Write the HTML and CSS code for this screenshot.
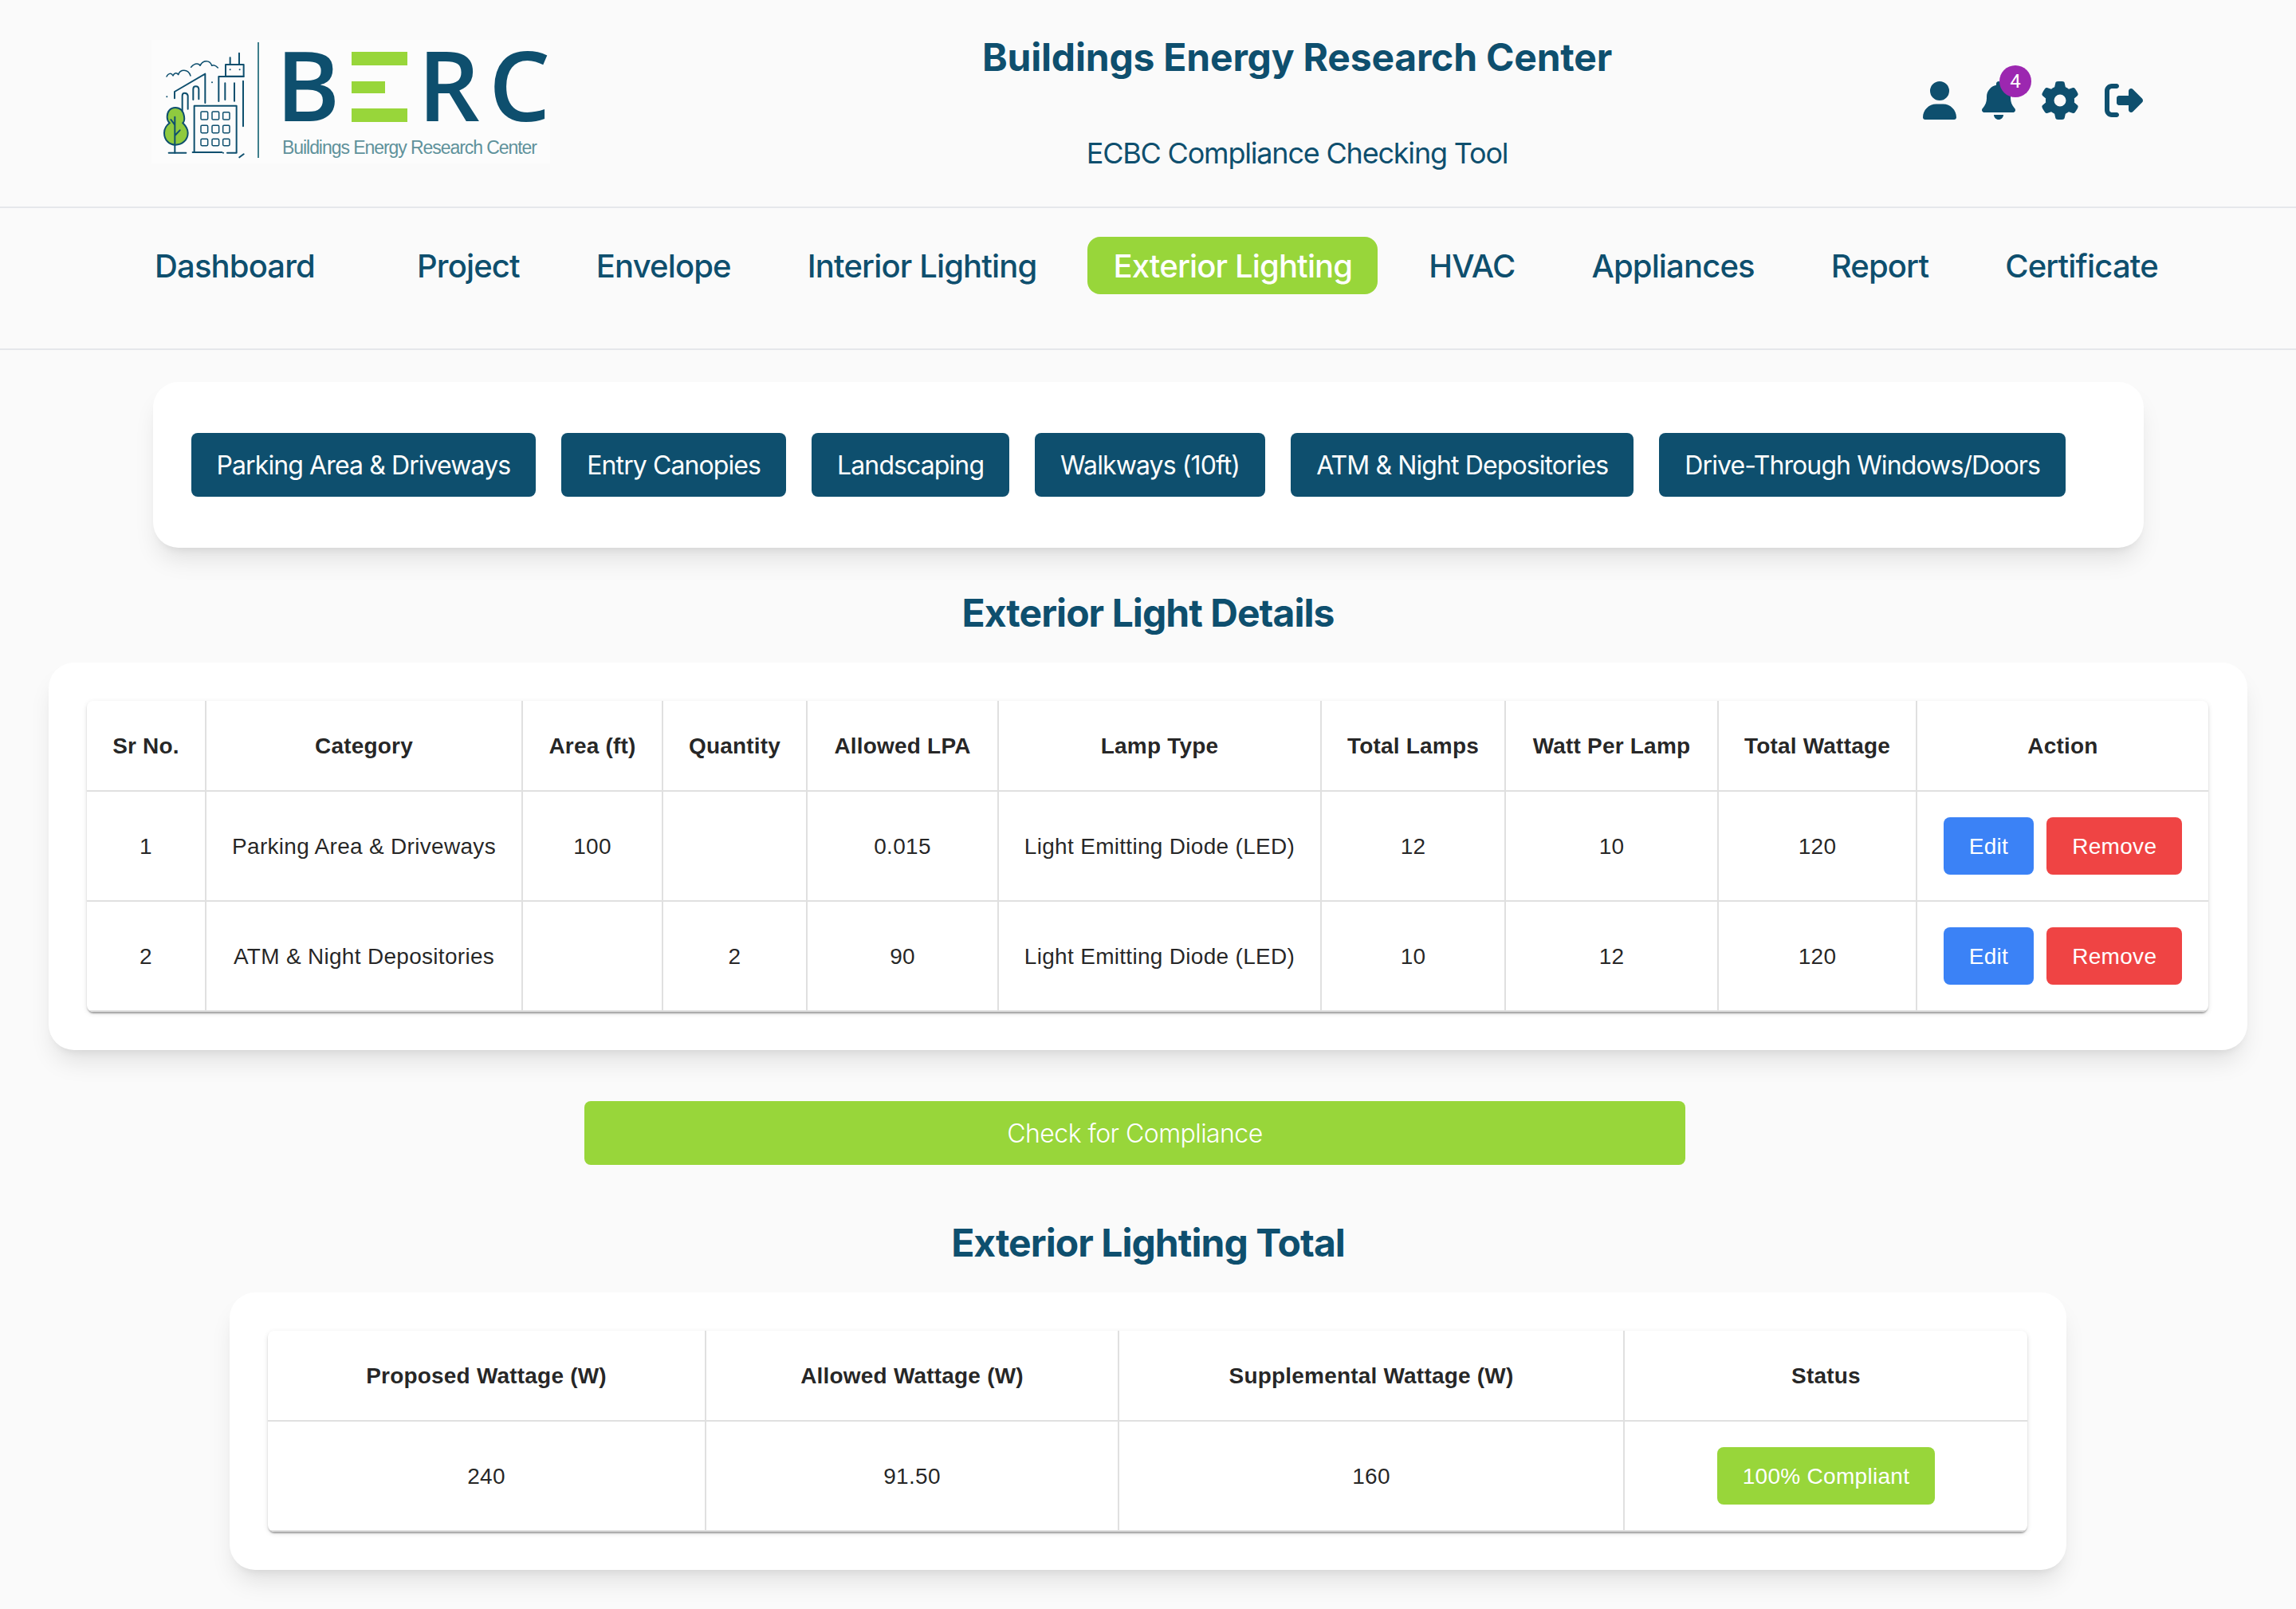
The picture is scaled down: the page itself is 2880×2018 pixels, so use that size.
FILE: index.html
```html
<!DOCTYPE html>
<html lang="en">
<head>
<meta charset="utf-8">
<title>ECBC Compliance Checking Tool</title>
<link rel="stylesheet" href="styles.css">
</head>
<body>
<header class="top">
  <svg class="logo" viewBox="0 0 500 155" width="500" height="155" aria-label="BERC logo">
    <rect class="logo-bg" width="500" height="155"/>
    <g transform="translate(5 -5) scale(.3333)">
      <g class="ink thin">
        <path d="M42 153C48 140 60 138 66 150C70 140 80 136 86 146C92 126 122 122 132 150"/>
        <path d="M134 118C150 98 165 105 168 112C178 90 205 90 212 112C218 108 228 112 235 120"/>
      </g>
      <g class="ink">
        <path d="M72 235V210L187 143V252"/>
        <path d="M101 282V225Q101 215 110 215Q120 215 122 225V275"/>
        <path d="M142 240V200Q142 190 152 190Q162 190 163 200V238"/>
        <path d="M238 246V153H332"/>
        <path d="M262 178V240M297 178V245M330 170V340"/>
        <rect x="264" y="108" width="68" height="44"/>
        <path d="M281 82V105M315 65V105"/>
        <path d="M146 437V263H305V437"/>
        <path d="M50 440H115M140 438H250M270 440H305M316 457L332 445"/>
      </g>
      <g class="ink thin">
        <rect x="171" y="285" width="26" height="30" rx="4"/>
        <rect x="213" y="285" width="26" height="30" rx="4"/>
        <rect x="254" y="287" width="25" height="28" rx="4"/>
        <rect x="171" y="337" width="26" height="28" rx="4"/>
        <rect x="213" y="337" width="26" height="28" rx="4"/>
        <rect x="254" y="337" width="25" height="28" rx="4"/>
        <rect x="171" y="388" width="26" height="25" rx="4"/>
        <rect x="213" y="388" width="26" height="25" rx="4"/>
        <rect x="254" y="388" width="25" height="25" rx="4"/>
      </g>
      <g class="dots">
        <circle cx="281" cy="127" r="3"/><circle cx="317" cy="127" r="3"/>
        <circle cx="213" cy="175" r="3"/><circle cx="43" cy="229" r="3"/><circle cx="255" cy="440" r="3"/>
      </g>
      <path class="tree" d="M75 270C55 270 44 285 44 305C44 318 50 325 53 328C40 338 33 350 33 365C33 392 52 410 75 410C100 410 122 392 122 365C122 350 113 338 103 328C106 325 110 316 108 303C105 285 95 270 75 270Z"/>
      <path class="ink" d="M73 305V440M73 375L92 355M58 315L73 335"/>
    </g>
    <rect class="logo-rule" x="133" y="3" width="2" height="145"/>
    <text class="logo-mark" x="156" y="102">B</text>
    <rect class="logo-bar" x="251" y="15" width="70" height="17"/>
    <rect class="logo-bar" x="251" y="52" width="42" height="15"/>
    <rect class="logo-bar" x="251" y="86" width="70" height="17"/>
    <text class="logo-mark" x="334" y="102">R</text>
    <text class="logo-mark" x="423" y="102">C</text>
    <text class="logo-sub" x="164" y="143" textLength="320" lengthAdjust="spacing">Buildings Energy Research Center</text>
  </svg>
  <div class="titles">
    <h1 class="site-title">Buildings Energy Research Center</h1>
    <p class="site-sub">ECBC Compliance Checking Tool</p>
  </div>
  <div class="tools">
    <svg class="icon narrow" viewBox="0 0 448 512"><path d="M224 256A128 128 0 1 0 224 0a128 128 0 1 0 0 256zm-45.7 48C79.8 304 0 383.8 0 482.3C0 498.7 13.3 512 29.7 512H418.3c16.4 0 29.7-13.3 29.7-29.7C448 383.8 368.2 304 269.7 304H178.3z"/></svg>
    <div class="bell">
      <svg class="icon narrow" viewBox="0 0 448 512"><path d="M224 0c-17.7 0-32 14.3-32 32V51.2C119 66 64 130.6 64 208v18.8c0 47-17.3 92.4-48.5 127.6l-7.4 8.3c-8.4 9.4-10.4 22.9-5.3 34.4S19.4 416 32 416H416c12.6 0 24-7.4 29.2-18.9s3.1-25-5.3-34.4l-7.4-8.3C401.3 319.2 384 273.9 384 226.8V208c0-77.4-55-142-128-156.8V32c0-17.7-14.3-32-32-32zm45.3 493.3c12-12 18.7-28.3 18.7-45.3H224 160c0 17 6.7 33.3 18.7 45.3s28.3 18.7 45.3 18.7s33.3-6.7 45.3-18.7z"/></svg>
      <span class="badge">4</span>
    </div>
    <svg class="icon" viewBox="0 0 512 512"><path d="M495.9 166.6c3.2 8.7 .5 18.4-6.4 24.6l-43.3 39.4c1.1 8.3 1.7 16.8 1.7 25.4s-.6 17.1-1.7 25.4l43.3 39.4c6.9 6.2 9.6 15.9 6.4 24.6c-4.4 11.9-9.7 23.3-15.8 34.3l-4.7 8.1c-6.6 11-14 21.4-22.1 31.2c-5.9 7.2-15.7 9.6-24.5 6.8l-55.7-17.7c-13.4 10.3-28.2 18.9-44 25.4l-12.5 57.1c-2 9.1-9 16.3-18.2 17.8c-13.8 2.3-28 3.5-42.5 3.5s-28.7-1.2-42.5-3.5c-9.2-1.5-16.2-8.7-18.2-17.8l-12.5-57.1c-15.8-6.5-30.6-15.1-44-25.4L83.1 425.9c-8.8 2.8-18.6 .3-24.5-6.8c-8.1-9.8-15.5-20.2-22.1-31.2l-4.7-8.1c-6.1-11-11.4-22.4-15.8-34.3c-3.2-8.7-.5-18.4 6.4-24.6l43.3-39.4C64.6 273.1 64 264.6 64 256s.6-17.1 1.7-25.4L22.4 191.2c-6.9-6.2-9.6-15.9-6.4-24.6c4.4-11.9 9.7-23.3 15.8-34.3l4.7-8.1c6.6-11 14-21.4 22.1-31.2c5.9-7.2 15.7-9.6 24.5-6.8l55.7 17.7c13.4-10.3 28.2-18.9 44-25.4l12.5-57.1c2-9.1 9-16.3 18.2-17.8C227.3 1.2 241.5 0 256 0s28.7 1.2 42.5 3.5c9.2 1.5 16.2 8.7 18.2 17.8l12.5 57.1c15.8 6.5 30.6 15.1 44 25.4l55.7-17.7c8.8-2.8 18.6-.3 24.5 6.8c8.1 9.8 15.5 20.2 22.1 31.2l4.7 8.1c6.1 11 11.4 22.4 15.8 34.3zM256 336a80 80 0 1 0 0-160 80 80 0 1 0 0 160z"/></svg>
    <svg class="icon" viewBox="0 0 512 512"><path d="M377.9 105.9L500.7 228.7c7.2 7.2 11.3 17.1 11.3 27.3s-4.1 20.1-11.3 27.3L377.9 406.1c-6.4 6.4-15 9.9-24 9.9c-18.7 0-33.9-15.2-33.9-33.9l0-62.1-128 0c-17.7 0-32-14.3-32-32l0-64c0-17.7 14.3-32 32-32l128 0 0-62.1c0-18.7 15.2-33.9 33.9-33.9c9 0 17.6 3.6 24 9.9zM160 96L96 96c-17.7 0-32 14.3-32 32l0 256c0 17.7 14.3 32 32 32l64 0c17.7 0 32 14.3 32 32s-14.3 32-32 32l-64 0c-53 0-96-43-96-96L0 128C0 75 43 32 96 32l64 0c17.7 0 32 14.3 32 32s-14.3 32-32 32z"/></svg>
  </div>
</header>

<nav class="nav">
  <a class="nav-item nav-first">Dashboard</a>
  <a class="nav-item">Project</a>
  <a class="nav-item">Envelope</a>
  <a class="nav-item">Interior Lighting</a>
  <a class="nav-item nav-active">Exterior Lighting</a>
  <a class="nav-item">HVAC</a>
  <a class="nav-item">Appliances</a>
  <a class="nav-item">Report</a>
  <a class="nav-item">Certificate</a>
</nav>

<main class="main">
  <section class="card card-tabs">
    <button class="tab">Parking Area &amp; Driveways</button>
    <button class="tab">Entry Canopies</button>
    <button class="tab">Landscaping</button>
    <button class="tab">Walkways (10ft)</button>
    <button class="tab">ATM &amp; Night Depositories</button>
    <button class="tab">Drive-Through Windows/Doors</button>
  </section>

  <h2 class="section-title">Exterior Light Details</h2>

  <section class="card card-details">
    <div class="table-wrap">
      <table class="grid details">
        <thead>
          <tr>
            <th>Sr No.</th><th>Category</th><th>Area (ft)</th><th>Quantity</th><th>Allowed LPA</th><th>Lamp Type</th><th>Total Lamps</th><th>Watt Per Lamp</th><th>Total Wattage</th><th>Action</th>
          </tr>
        </thead>
        <tbody>
          <tr>
            <td>1</td><td>Parking Area &amp; Driveways</td><td>100</td><td></td><td>0.015</td><td>Light Emitting Diode (LED)</td><td>12</td><td>10</td><td>120</td>
            <td class="cell-actions"><div class="actions"><button class="act act-edit">Edit</button><button class="act act-remove">Remove</button></div></td>
          </tr>
          <tr>
            <td>2</td><td>ATM &amp; Night Depositories</td><td></td><td>2</td><td>90</td><td>Light Emitting Diode (LED)</td><td>10</td><td>12</td><td>120</td>
            <td class="cell-actions"><div class="actions"><button class="act act-edit">Edit</button><button class="act act-remove">Remove</button></div></td>
          </tr>
        </tbody>
      </table>
    </div>
  </section>

  <button class="check">Check for Compliance</button>

  <h2 class="section-title">Exterior Lighting Total</h2>

  <section class="card card-total">
    <div class="table-wrap">
      <table class="grid totals">
        <thead>
          <tr><th>Proposed Wattage (W)</th><th>Allowed Wattage (W)</th><th>Supplemental Wattage (W)</th><th>Status</th></tr>
        </thead>
        <tbody>
          <tr>
            <td>240</td><td>91.50</td><td>160</td>
            <td class="cell-actions"><div class="actions"><span class="act act-ok">100% Compliant</span></div></td>
          </tr>
        </tbody>
      </table>
    </div>
  </section>
</main>
</body>
</html>
```

FILE: styles.css
```css
* { box-sizing: border-box; }

html, body { margin: 0; padding: 0; }

body {
  width: 2880px;
  min-height: 2018px;
  overflow: hidden;
  background: #fafafa;
  font-family: Inter, "Liberation Sans", sans-serif;
  color: #0e4f6e;
}

/* Header */
.top {
  display: flex;
  align-items: flex-start;
  height: 261px;
  padding: 0 192px 0 190px;
  border-bottom: 2px solid #e5e7eb;
}

.logo { flex: none; margin-top: 50px; display: block; overflow: visible; }
.logo-bg { fill: #fcfcfc; }
.ink { fill: none; stroke: #0e4f6e; stroke-width: 6; stroke-linecap: round; stroke-linejoin: round; }
.thin { stroke-width: 4.5; }
.dots { fill: #0e4f6e; }
.tree { fill: #8fca3f; stroke: #0e4f6e; stroke-width: 6; }
.logo-rule { fill: #3f7f8c; }
.logo-bar { fill: #98d63a; }
.logo-mark { font-family: "Open Sans", sans-serif; font-weight: 600; font-size: 122px; fill: #0e4f6e; }
.logo-sub { font-family: "Liberation Sans", sans-serif; font-weight: 400; font-size: 23px; fill: #5f929b; }

.titles { flex: none; width: 1240px; margin-left: 317px; padding-top: 36px; text-align: center; }
.site-title { margin: 0; font-size: 48px; line-height: 72px; font-weight: 650; letter-spacing: -.2px; }
.site-sub { margin: 57px 0 0; font-size: 36px; line-height: 54px; font-weight: 400; letter-spacing: -1.2px; }

.tools { display: flex; gap: 32px; margin-left: auto; margin-top: 102px; }
.icon { display: block; width: 48px; height: 48px; fill: #0e4f6e; }
.icon.narrow { width: 42px; }
.bell { position: relative; }
.badge {
  position: absolute;
  top: -20px;
  left: 22px;
  width: 40px;
  height: 40px;
  border-radius: 50%;
  background: #9c27b0;
  color: #fff;
  font-family: Roboto, sans-serif;
  font-size: 24px;
  line-height: 40px;
  text-align: center;
}

/* Navigation */
.nav {
  display: flex;
  gap: 32px;
  height: 178px;
  padding: 36px 0 0 162px;
  border-bottom: 2px solid #e5e7eb;
  align-items: flex-start;
}
.nav-item {
  height: 72px;
  padding: 0 32px;
  font-size: 40px;
  line-height: 74px;
  font-weight: 550;
  letter-spacing: -.85px;
  white-space: nowrap;
  border-radius: 16px;
}
.nav-first { margin-right: 32px; }
.nav-active { background: #98d63a; color: #fff; }

/* Cards */
.main { padding-top: 40px; }
.card {
  margin: 0 auto;
  background: #fff;
  border-radius: 32px;
  box-shadow: 0 20px 30px -6px rgba(0,0,0,.1), 0 8px 12px -8px rgba(0,0,0,.1);
}
.card-tabs {
  display: flex;
  gap: 32px;
  width: 2497px;
  padding: 64px 48px;
}
.card-details { width: 2758px; padding: 48px 49px 48px 48px; }
.card-total { width: 2304px; padding: 48px 49px 48px 48px; }

.tab {
  height: 80px;
  padding: 0 32px;
  border: 0;
  border-radius: 8px;
  background: #0e4f6e;
  color: #fff;
  font-family: Inter, sans-serif;
  font-size: 32px;
  font-weight: 400;
  letter-spacing: -.9px;
  white-space: nowrap;
}

.section-title {
  margin: 46px 0 26px;
  font-size: 48px;
  line-height: 72px;
  font-weight: 650;
  letter-spacing: -.95px;
  text-align: center;
}

/* Tables */
.table-wrap {
  border-radius: 8px;
  background: #fff;
  overflow: hidden;
  box-shadow: 0 4px 2px -2px rgba(0,0,0,.2), 0 2px 2px 0 rgba(0,0,0,.14), 0 2px 6px 0 rgba(0,0,0,.12);
}
.grid {
  width: 100%;
  table-layout: fixed;
  border-collapse: separate;
  border-spacing: 0;
  font-family: "Liberation Sans", Arial, sans-serif;
  font-size: 28px;
  line-height: 48px;
  letter-spacing: .3px;
  color: rgba(0,0,0,.87);
}
.grid th, .grid td {
  padding: 33px 0 31px;
  text-align: center;
  border-right: 2px solid #e0e0e0;
  border-bottom: 2px solid #e0e0e0;
  font-weight: 400;
  white-space: nowrap;
}
.grid th { font-weight: 700; letter-spacing: .2px; }
.grid td { height: 138px; }
.grid td.cell-actions { padding: 32px 0; }
.grid th:last-child, .grid td:last-child { border-right: 0; }

.details th:nth-child(1) { width: 150px; }
.details th:nth-child(2) { width: 397px; }
.details th:nth-child(3) { width: 176px; }
.details th:nth-child(4) { width: 181px; }
.details th:nth-child(5) { width: 240px; }
.details th:nth-child(6) { width: 405px; }
.details th:nth-child(7) { width: 231px; }
.details th:nth-child(8) { width: 267px; }
.details th:nth-child(9) { width: 249px; }

.totals th:nth-child(1) { width: 550px; }
.totals th:nth-child(2) { width: 518px; }
.totals th:nth-child(3) { width: 634px; }

.actions { display: flex; justify-content: center; gap: 16px; }
.act {
  display: flex;
  align-items: center;
  justify-content: center;
  height: 72px;
  padding: 2px 32px 0;
  border: 0;
  border-radius: 8px;
  color: #fff;
  font-family: "Liberation Sans", Arial, sans-serif;
  font-size: 28px;
  letter-spacing: .3px;
}
.act-edit { background: #3b82f6; }
.act-remove { background: #ef4444; }
.act-ok { background: #98d63a; }

.check {
  display: block;
  width: 1381px;
  height: 80px;
  margin: 64px 0 0 733px;
  border: 0;
  border-radius: 8px;
  background: #98d63a;
  color: #fff;
  font-family: Inter, sans-serif;
  font-size: 32px;
  font-weight: 300;
  letter-spacing: -.55px;
}
.check + .section-title { margin-top: 62px; }
```
